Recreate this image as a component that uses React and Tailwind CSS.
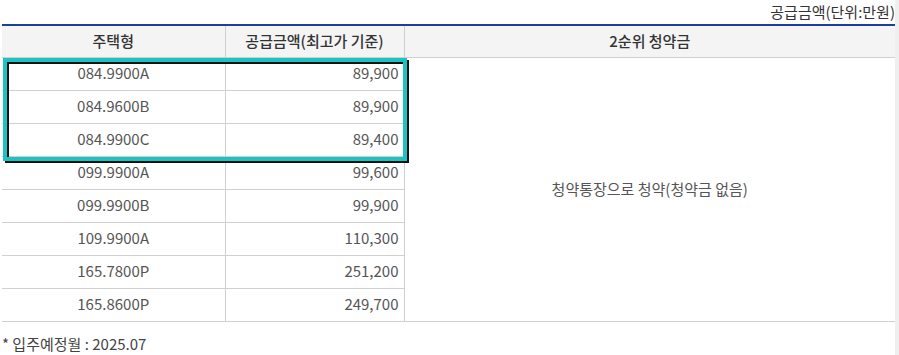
import React from "react";

const rows = [
  { type: "084.9900A", price: "89,900" },
  { type: "084.9600B", price: "89,900" },
  { type: "084.9900C", price: "89,400" },
  { type: "099.9900A", price: "99,600" },
  { type: "099.9900B", price: "99,900" },
  { type: "109.9900A", price: "110,300" },
  { type: "165.7800P", price: "251,200" },
  { type: "165.8600P", price: "249,700" },
];

const App = () => {
  return (
    <div
      className="flex w-[899px] h-[355px] bg-white text-[15px] text-[#555]"
      style={{ fontFamily: '"Noto Sans CJK KR", "Noto Sans", sans-serif' }}
    >
      <div className="w-[895px] pl-[2px]">
        {/* 단위 표시 */}
        <div className="h-[24px] flex items-center justify-end text-[#333]">
          공급금액(단위:만원)
        </div>

        <div className="relative">
          <table className="w-full border-collapse border-t-2 border-[#1c3f9f] table-fixed">
            <colgroup>
              <col className="w-[223px]" />
              <col className="w-[179px]" />
              <col />
            </colgroup>
            <thead>
              <tr className="bg-[#f4f4f4] h-[32px]">
                <th className="font-medium text-[#333] border-b border-r border-[#d0d0d0]">
                  주택형
                </th>
                <th className="font-medium text-[#333] border-b border-r border-[#d0d0d0]">
                  공급금액(최고가 기준)
                </th>
                <th className="font-medium text-[#333] border-b border-[#d0d0d0]">
                  2순위 청약금
                </th>
              </tr>
            </thead>
            <tbody>
              {rows.map((row, i) => (
                <tr key={row.type} className="h-[33px]">
                  <td className="text-center border-b border-r border-[#d0d0d0]">
                    {row.type}
                  </td>
                  <td className="text-right pr-[5px] border-b border-r border-[#d0d0d0]">
                    {row.price}
                  </td>
                  {i === 0 && (
                    <td
                      rowSpan={rows.length}
                      className="text-center border-b border-[#d0d0d0]"
                    >
                      청약통장으로 청약(청약금 없음)
                    </td>
                  )}
                </tr>
              ))}
            </tbody>
          </table>

          {/* 강조 박스 */}
          <div className="absolute left-[1px] top-[34px] w-[404px] h-[103px] border-[4px] border-[#1cc3c0] shadow-[2px_2px_0_#111,inset_2px_2px_0_#111] pointer-events-none"></div>
        </div>

        <div className="mt-[11px] text-[#444]">* 입주예정월 : 2025.07</div>
      </div>
      <div className="w-[4px] bg-[#efefef]"></div>
    </div>
  );
};

export default App;
